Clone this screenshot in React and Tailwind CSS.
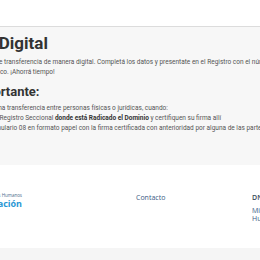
export default function App() {
  return (
    <div className="w-[260px] h-[260px] overflow-hidden bg-white font-['Roboto',sans-serif] flex flex-col">
      {/* top bar */}
      <div className="h-[27px] shrink-0 border-b border-[#dcdcdc] bg-white" />

      {/* main content */}
      <div className="h-[138px] shrink-0 bg-[#f7f7f7] pt-[6px] overflow-hidden">
        <h1 className="ml-[-111px] whitespace-nowrap text-[17px] leading-[20px] font-bold text-[#333]">
          Transferencia Digital
        </h1>
        <div className="mt-[4px] text-[6.5px] leading-[10px] text-[#555] whitespace-nowrap">
          <p className="ml-[-56px]">
            Realizá el trámite de transferencia de manera digital. Completá los datos y presentate en el Registro con el número de trámite
          </p>
          <p className="ml-[-100px]">
            que recibiste en tu correo electrónico. ¡Ahorrá tiempo!
          </p>
        </div>
        <h2 className="mt-[7px] ml-[-29px] whitespace-nowrap text-[13px] leading-[16px] font-bold text-[#333]">
          Importante:
        </h2>
        <ul className="mt-[3px] text-[6.5px] leading-[10px] text-[#555] whitespace-nowrap">
          <li className="ml-[-43px]">Podés hacer una transferencia entre personas físicas o jurídicas, cuando:</li>
          <li className="ml-[-80px]">
            Ambas partes concurran al Registro Seccional <b className="text-[#333]">donde está Radicado el Dominio</b> y certifiquen su firma allí
          </li>
          <li className="ml-[-21px]">
            El Formulario 08 en formato papel con la firma certificada con anterioridad por alguna de las partes
          </li>
        </ul>
      </div>

      {/* footer */}
      <div className="h-[83px] shrink-0 bg-white flex font-['Open_Sans',sans-serif] pt-[27px]">
        <div className="w-[22px] shrink-0 flex flex-col items-end whitespace-nowrap">
          <span className="text-[4.5px] leading-[6px] text-[#4a6a8a]">
            Ministerio de Justicia y Derechos Humanos
          </span>
          <span className="text-[9px] leading-[11px] font-bold text-[#2897d4]">
            Presidencia de la Nación
          </span>
        </div>
        <div className="w-[114px] shrink-0" />
        <div className="w-[116px] shrink-0 text-[7px] leading-[10px] text-[#3a5b85] pt-[1px]">
          Contacto
        </div>
        <div className="shrink-0 whitespace-nowrap flex flex-col text-[7px] pt-[1px]">
          <span className="leading-[10px] text-[#3a4a5a] font-semibold">DNRPA</span>
          <span className="mt-[4px] leading-[8px] text-[#3a5b85]">Ministerio de Justicia</span>
          <span className="leading-[8px] text-[#3a5b85]">Humanos</span>
        </div>
      </div>

      {/* bottom band */}
      <div className="flex-1 bg-[#f5f5f5]" />
    </div>
  );
}
